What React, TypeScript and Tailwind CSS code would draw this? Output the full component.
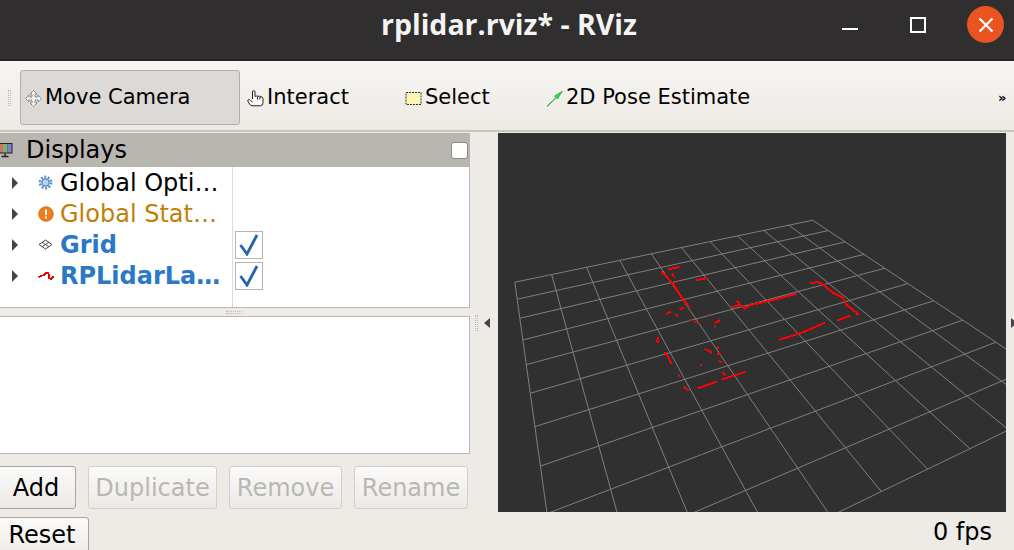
// RViz window: title bar, tool strip, Displays panel, 3D view
const project = (u: number, v: number): [number, number] => {
  const s = u / 10;
  const t = v / 7;
  const w = 0.2697 * s - 0.3906 * t + 1;
  return [(517.9 * s - 185.2 * t + 514.2) / w, (-2.67 * s + 1.98 * t + 282.6) / w];
};

const gridLines = Array.from({ length: 11 }, (_, i) => [
  [project(i, 0), project(i, 10)],
  [project(0, i), project(10, i)],
]).flat();

const SCAN = [
  "M64,50 L100,90 L125,130 L147,158",
  "M83,44 L118,37",
  "M95,57 L102,68",
  "M110,80 L117,79",
  "M167,78 L200,70",
  "M78,178 L92,172",
  "M107,186 L112,180",
  "M118,165 L131,160",
  "M150,195 L155,200",
  "M162,200 L165,203",
  "M172,204 L176,207",
  "M204,182 L207,179",
  "M221,215 L228,217",
  "M225,205 L240,197",
  "M48,262 L55,248",
  "M50,255 L53,265",
  "M75,293 L82,305 L93,328",
  "M113,360 L121,368",
  "M131,397 L146,410",
  "M172,402 L230,382",
  "M244,376 L316,352",
  "M193,283 L216,295",
  "M230,278 L237,282",
  "M232,298 L243,300",
  "M235,320 L245,323",
  "M179,331 L185,333",
  "M246,354 L256,362",
  "M275,158 L300,150 L290,139",
  "M300,150 L313,162 L330,152 L400,136 L470,118",
  "M510,85 L535,83 L550,90 L580,115 L610,130 L620,150 L655,178 L650,182",
  "M592,198 L632,183",
  "M418,256 L485,235 L555,205",
];

function MoveIcon() {
  return (
    <svg width="17" height="17" viewBox="0 0 17 17" fill="#f4f4f4" stroke="#777" strokeWidth="1" strokeDasharray="2 0.6">
      <path d="M8.5 0.5 L12 4 H10 V7 H13 V5 L16.5 8.5 L13 12 V10 H10 V13 H12 L8.5 16.5 L5 13 H7 V10 H4 V12 L0.5 8.5 L4 5 V7 H7 V4 H5 Z" />
    </svg>
  );
}

function HandIcon() {
  return (
    <svg width="17" height="17" viewBox="0 0 17 17" fill="#fff" stroke="#222" strokeWidth="1">
      <path d="M5.5 9 V2 Q5.5 0.7 6.7 0.7 Q8 0.7 8 2 V6.5 Q10 5.6 11 6.3 Q13 5.8 14 6.8 Q16 6.8 16 8.6 V12.5 Q16 15.8 13.5 15.8 H5 Q3.5 15.8 2.5 14 L0.8 11 Q0.5 9.8 1.7 9.6 Q2.7 9.5 3.5 10.6 L5.5 12" />
      <path d="M10.5 7 V9.5 M13 7 V9.5" />
    </svg>
  );
}

function SelectIcon() {
  return (
    <svg width="17" height="17" viewBox="0 0 17 17">
      <path d="M1 2.5 H16 V14.5 H1 Z" fill="#fbf5b4" stroke="#333" strokeWidth="1" strokeDasharray="2 1" />
    </svg>
  );
}

function PoseIcon() {
  return (
    <svg width="17" height="17" viewBox="0 0 17 17">
      <path d="M1 16 L10 7.5 L8.5 6 L16.5 1 L11.5 9 L10.2 7.7 L1.5 16.5 Z" fill="#22e34a" stroke="#0b8a2b" strokeWidth="0.5" />
    </svg>
  );
}

function MonitorIcon() {
  return (
    <svg width="16" height="16" viewBox="0 0 16 16" className="shrink-0">
      <rect x="0.5" y="1" width="15" height="10.5" fill="#222" />
      <rect x="1.5" y="2" width="4.5" height="8.5" fill="#d96b62" />
      <rect x="6" y="2" width="4.5" height="8.5" fill="#74b56d" />
      <rect x="10.5" y="2" width="4" height="8.5" fill="#7f7fd0" />
      <path d="M8 11.5 V14 M4.5 14.5 H11.5" stroke="#222" strokeWidth="1.4" />
    </svg>
  );
}

function GearIcon() {
  return (
    <svg width="15" height="15" viewBox="0 0 15 15">
      <circle cx="7.5" cy="7.5" r="5.6" fill="none" stroke="#5b8fd0" strokeWidth="2.6" strokeDasharray="2 1.5" />
      <circle cx="7.5" cy="7.5" r="3.6" fill="#bcd3ee" stroke="#4f7fc0" strokeWidth="1.2" />
    </svg>
  );
}

function StatusIcon() {
  return (
    <svg width="16" height="16" viewBox="0 0 16 16">
      <circle cx="8" cy="8" r="7.3" fill="#ee7d1c" stroke="#c9640f" strokeWidth="0.8" />
      <path d="M8 3.5 V9" stroke="#fff" strokeWidth="2" />
      <rect x="7" y="10.5" width="2" height="2" fill="#fff" />
    </svg>
  );
}

function GridIcon() {
  return (
    <svg width="15" height="15" viewBox="0 0 15 15" fill="none" stroke="#444" strokeWidth="1">
      <path d="M7.5 3 L14 7.5 L7.5 12 L1 7.5 Z M4.2 5.3 L10.8 9.7 M10.8 5.3 L4.2 9.7" />
    </svg>
  );
}

function ScanIcon() {
  return (
    <svg width="17" height="12" viewBox="0 0 17 12" fill="none" stroke="#f00000" strokeWidth="1.8" shapeRendering="crispEdges">
      <path d="M0.5 7 L3 6 L6 5 L8 3 L10.5 3 L11 8 L13.5 9 L14.5 7 L16.5 6.5" />
    </svg>
  );
}

function Arrow() {
  return <div className="h-0 w-0 border-y-[6px] border-l-[6px] border-y-transparent border-l-[#444]" />;
}

function Check() {
  return (
    <div className="flex h-[28px] w-[28px] items-center justify-center border border-[#b5b3b0] bg-white">
      <svg width="22" height="22" viewBox="0 0 22 22" fill="none" stroke="#2566a8" strokeWidth="2.8">
        <path d="M2.5 11 L9 20 L19 1" />
      </svg>
    </div>
  );
}

function DotHandle({ className }: { className: string }) {
  return <div className={className} />;
}

const ROWS = [
  { icon: <GearIcon />, label: "Global Opti…", tone: "text-black", checked: false },
  { icon: <StatusIcon />, label: "Global Stat…", tone: "text-[#c08008]", checked: false },
  { icon: <GridIcon />, label: "Grid", tone: "font-bold text-[#2a78c6]", checked: true },
  { icon: <ScanIcon />, label: "RPLidarLa…", tone: "font-bold text-[#2a78c6]", checked: true },
];

function PanelButton({ label, width, disabled }: { label: string; width: string; disabled?: boolean }) {
  return (
    <div
      className={`flex h-[43px] items-center justify-center rounded-[3px] border bg-gradient-to-b from-[#fbfafa] to-[#ece9e5] ${width} ${
        disabled ? "border-[#d2cfcb] text-[#b9b7b4]" : "border-[#a9a6a2] text-black"
      }`}
    >
      {label}
    </div>
  );
}

export default function App() {
  return (
    <div className="flex h-[550px] w-[1014px] flex-col overflow-hidden bg-[#eeebe7] font-['DejaVu_Sans',sans-serif] text-[21px] text-black">
      <header className="flex h-[61px] shrink-0 items-center border-b-2 border-[#262424] bg-[#302e2e] pb-[10px]">
        <div className="ml-[381px] w-[440px] font-['Open_Sans',sans-serif] text-[28.5px] leading-none font-bold text-[#f4f4f2]">
          rplidar.rviz* - RViz
        </div>
        <div className="ml-[21px] mt-[9px] h-[2px] w-[16px] self-center bg-white" />
        <div className="ml-[52px] h-[16px] w-[16px] border-2 border-white" />
        <div className="ml-[41px] flex h-[37px] w-[37px] items-center justify-center rounded-full bg-[#e95420]">
          <svg width="16" height="16" viewBox="0 0 16 16" stroke="#fff" strokeWidth="2.2">
            <path d="M1.5 1.5 L14.5 14.5 M14.5 1.5 L1.5 14.5" />
          </svg>
        </div>
      </header>

      <nav className="flex h-[71px] shrink-0 items-center border-b-2 border-[#c9c6c2] bg-gradient-to-b from-[#f7f5f1] to-[#edeae6] pt-[4px] pl-[8px]">
        <DotHandle className="h-[16px] w-[3px] border-x border-dotted border-[#bdbab6]" />
        <div className="ml-[9px] flex h-[55px] w-[220px] items-center gap-[3px] rounded-[3px] border border-[#b2afab] bg-[#dcd9d6] pt-[1px] pl-[4px]">
          <MoveIcon />
          Move Camera
        </div>
        <div className="ml-[7px] flex w-[158px] items-center gap-[3px] pt-[1px]">
          <HandIcon />
          Interact
        </div>
        <div className="flex w-[141px] items-center gap-[3px] pt-[1px]">
          <SelectIcon />
          Select
        </div>
        <div className="flex w-[452px] items-center gap-[3px] pt-[1px]">
          <PoseIcon />
          2D Pose Estimate
        </div>
        <div className="text-[13px] font-bold">»</div>
      </nav>

      <main className="flex min-h-0 flex-1 text-[24px]">
        <aside className="flex w-[470px] shrink-0 flex-col pt-[1px]">
          <div className="flex h-[34px] shrink-0 items-center bg-[#b9b5b1] pr-[2px] pl-0">
            <div className="-ml-[3px]">
              <MonitorIcon />
            </div>
            <span className="ml-[13px] flex-1">Displays</span>
            <div className="h-[17px] w-[17px] rounded-[3px] border border-[#8d8a86] bg-white" />
          </div>
          <div className="flex h-[141px] shrink-0 border-r border-b border-[#bcb9b5] bg-white">
            <div className="flex w-[233px] shrink-0 flex-col border-r border-[#dedcd9]">
              {ROWS.map((r) => (
                <div key={r.label} className="flex h-[31px] items-center whitespace-nowrap">
                  <div className="ml-[12px] w-[25px]">
                    <Arrow />
                  </div>
                  <div className="flex w-[23px] justify-start pl-[1px]">{r.icon}</div>
                  <span className={r.tone}>{r.label}</span>
                </div>
              ))}
            </div>
            <div className="flex flex-col pl-[2px]">
              {ROWS.map((r) => (
                <div key={r.label} className="flex h-[31px] items-center">
                  {r.checked && <Check />}
                </div>
              ))}
            </div>
          </div>
          <div className="flex h-[8px] shrink-0 items-center justify-end pr-[228px]">
            <DotHandle className="h-[3px] w-[16px] border-y border-dotted border-[#bdbab6]" />
          </div>
          <div className="h-[138px] shrink-0 border-y border-r border-[#bcb9b5] bg-white" />
          <div className="mt-[12px] flex shrink-0 gap-[12px]">
            <div className="-ml-[3px]">
              <PanelButton label="Add" width="w-[79px] pr-[1px]" />
            </div>
            <PanelButton label="Duplicate" width="w-[129px]" disabled />
            <PanelButton label="Remove" width="w-[113px]" disabled />
            <PanelButton label="Rename" width="w-[114px]" disabled />
          </div>
          <div className="mt-[8px] -ml-[3px] flex h-[40px] w-[92px] shrink-0 items-center justify-center rounded-t-[3px] border border-[#a9a6a2] bg-gradient-to-b from-[#fbfafa] to-[#eeebe7] pr-[2px] pb-[4px]">
            Reset
          </div>
        </aside>

        <div className="flex w-[28px] shrink-0 items-start pt-[186px] pl-[5px]">
          <DotHandle className="mt-[-3px] h-[16px] w-[3px] border-x border-dotted border-[#bdbab6]" />
          <div className="ml-[6px] h-0 w-0 border-y-[5px] border-r-[6px] border-y-transparent border-r-[#444]" />
        </div>

        <div className="flex w-[508px] shrink-0 flex-col pt-[1px]">
          <svg width="508" height="380" viewBox="498 133 508 380" className="block bg-[#303030]">
            {gridLines.map(([a, b], i) => (
              <line key={i} x1={a[0]} y1={a[1]} x2={b[0]} y2={b[1]} stroke="#808080" strokeWidth="1" />
            ))}
            <g transform="translate(640 255) scale(0.3333)" fill="none" stroke="#ff0000" strokeWidth="6" shapeRendering="crispEdges">
              {SCAN.map((d) => (
                <path key={d} d={d} />
              ))}
            </g>
          </svg>
          <div className="flex justify-end pt-[2px] pr-[14px]">0 fps</div>
        </div>

        <div className="flex flex-1 items-start pt-[186px] pl-[5px]">
          <div className="h-0 w-0 border-y-[5px] border-l-[6px] border-y-transparent border-l-[#444]" />
        </div>
      </main>
    </div>
  );
}
